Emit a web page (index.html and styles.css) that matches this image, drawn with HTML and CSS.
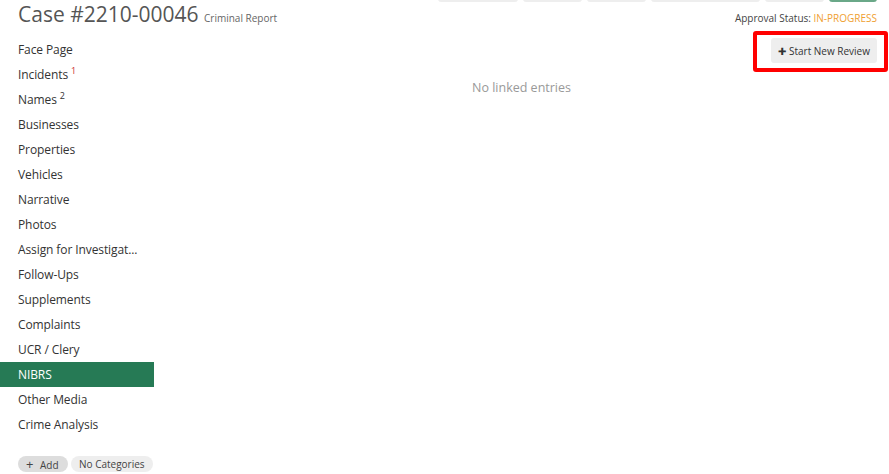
FILE: index.html
```html
<!DOCTYPE html>
<html lang="en">
<head>
  <meta charset="UTF-8" />
  <meta name="viewport" content="width=device-width, initial-scale=1.0"/>
  <title>Case #2210-00046</title>
  <link rel="stylesheet" href="styles.css">
</head>
<body>
  <div class="header">
    <h1 class="title">Case #2210-00046 <small>Criminal Report</small></h1>
    <div class="header-right">
      <div class="toolbar">
        <span class="tool w80"></span>
        <span class="tool w59"></span>
        <span class="tool w59"></span>
        <span class="tool w110"></span>
        <span class="tool w59"></span>
        <span class="tool green w48"></span>
      </div>
      <div class="status">Approval Status: <span class="progress">IN-PROGRESS</span></div>
    </div>
  </div>

  <div class="layout">
    <div class="sidebar">
      <ul class="nav">
        <li>Face Page</li>
        <li>Incidents <sup class="red">1</sup></li>
        <li>Names <sup>2</sup></li>
        <li>Businesses</li>
        <li>Properties</li>
        <li>Vehicles</li>
        <li>Narrative</li>
        <li>Photos</li>
        <li>Assign for Investigat...</li>
        <li>Follow-Ups</li>
        <li>Supplements</li>
        <li>Complaints</li>
        <li>UCR / Clery</li>
        <li class="active">NIBRS</li>
        <li>Other Media</li>
        <li>Crime Analysis</li>
      </ul>
      <div class="tags">
        <span class="pill add"><span class="plus">+</span> Add</span>
        <span class="pill">No Categories</span>
      </div>
    </div>

    <div class="main">
      <div class="actions">
        <div class="review-wrap">
          <button class="review">✚ Start New Review</button>
          <div class="highlight"></div>
        </div>
      </div>
      <div class="empty">No linked entries</div>
    </div>
  </div>
</body>
</html>
```

FILE: styles.css
```css
* { box-sizing: border-box; }
body {
  font-family: 'Open Sans', 'Noto Sans', sans-serif;
  margin: 0;
  color: #333;
  background: white;
}
.header {
  display: flex;
  justify-content: space-between;
  padding: 0 12px 0 18px;
  height: 37px;
}
.title {
  margin: 0;
  font-size: 21px;
  font-weight: normal;
  line-height: 29px;
  color: #555;
  white-space: nowrap;
}
.title small {
  font-size: 10px;
  color: #666;
}
.header-right {
  display: flex;
  flex-direction: column;
  align-items: flex-end;
}
.toolbar {
  display: flex;
  gap: 5px;
  margin-top: -22px;
}
.tool {
  height: 24px;
  background: #eee;
  border-radius: 3px;
}
.tool.green { background: #6aa888; }
.w80 { width: 80px; }
.w59 { width: 59px; }
.w110 { width: 109px; }
.w48 { width: 48px; }
.status {
  font-size: 10px;
  line-height: 14px;
  margin-top: 9px;
  color: #444;
}
.progress { color: #f0a030; }

.layout {
  display: flex;
}
.sidebar {
  width: 154px;
  flex-shrink: 0;
}
.nav {
  list-style: none;
  margin: 0;
  padding: 0;
}
.nav li {
  font-size: 12px;
  line-height: 25px;
  height: 25px;
  padding-left: 18px;
  white-space: nowrap;
  letter-spacing: -0.1px;
}
.nav li sup {
  font-size: 9px;
  line-height: 0;
}
.nav li sup.red { color: #c33; }
.nav li.active {
  background: #267a55;
  color: white;
}
.tags {
  display: flex;
  gap: 3px;
  padding-left: 18px;
  margin-top: 19px;
}
.pill {
  font-size: 10px;
  line-height: 16px;
  height: 16px;
  padding: 0 8px;
  border-radius: 8px;
  background: #eee;
  color: #444;
  white-space: nowrap;
}
.pill.add {
  background: #ddd;
  width: 50px;
}
.plus {
  font-size: 13px;
  margin-right: 4px;
}

.main {
  flex: 1;
}
.actions {
  display: flex;
  justify-content: flex-end;
  padding-right: 12px;
  margin-top: 1px;
}
.review-wrap {
  position: relative;
  display: flex;
}
.review {
  font-family: inherit;
  font-size: 10px;
  height: 25px;
  padding: 0 7px;
  border: none;
  border-radius: 3px;
  background: #eee;
  color: #333;
}
.highlight {
  position: absolute;
  left: -18px;
  right: -11px;
  top: -7px;
  bottom: -9px;
  border: 4px solid #f00;
  border-radius: 3px;
}
.empty {
  text-align: center;
  font-size: 12.5px;
  color: #999;
  margin-top: 13px;
  line-height: 24px;
}
```
